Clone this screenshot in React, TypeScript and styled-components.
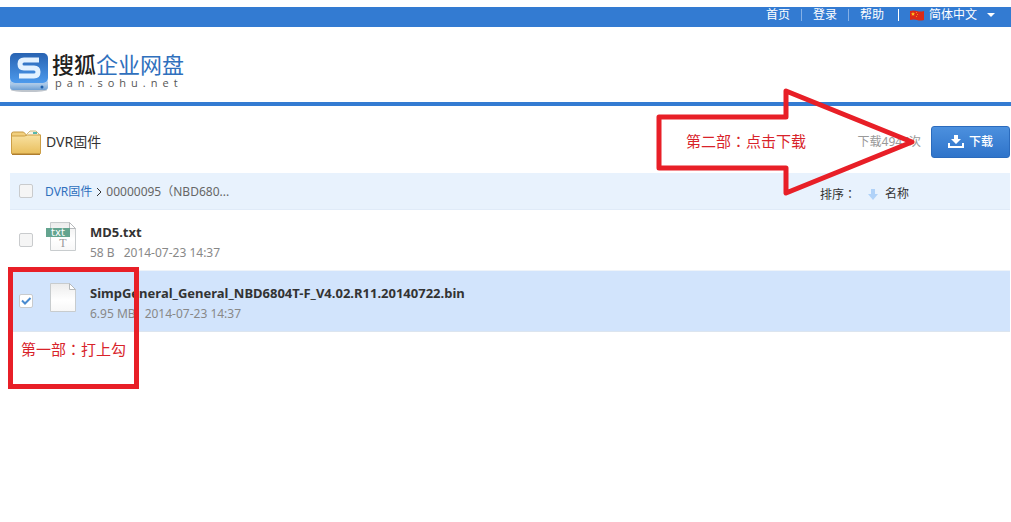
import React, { useState } from "react";
import styled, { createGlobalStyle } from "styled-components";

const GlobalStyle = createGlobalStyle`
  * { box-sizing: border-box; }
  body {
    margin: 0;
    background: #fff;
    color: #333;
    font-family: "Noto Sans", "Noto Sans CJK SC", sans-serif;
    font-size: 12px;
    line-height: 16px;
  }
`;

const Page = styled.div`
  position: relative;
  min-height: 100vh;
  padding-top: 7px;
`;

const TopBar = styled.nav`
  display: flex;
  justify-content: flex-end;
  align-items: flex-start;
  height: 20px;
  padding-right: 16px;
  background: #337bd2;
`;

const TopLink = styled.a`
  padding: 0 11px;
  border-right: 1px solid #84b0e6;
  color: #fff;
  line-height: 12px;
  margin-top: 2px;
  text-decoration: none;
  white-space: nowrap;
  &:last-of-type { padding-right: 14px; border-color: #fff; }
`;

const LanguageButton = styled.button`
  display: flex;
  align-items: center;
  gap: 5px;
  height: 16px;
  padding: 0 0 0 11px;
  border: 0;
  background: none;
  color: #fff;
  font: inherit;
`;

const Caret = styled.span`
  margin-left: 5px;
  border: 4px solid transparent;
  border-top-color: #fff;
  border-bottom: 0;
`;

const Header = styled.header`
  display: flex;
  align-items: flex-start;
  height: 79px;
  padding: 25px 9px 0;
  border-bottom: 4px solid #337bd2;
`;

const Brand = styled.a`
  display: flex;
  gap: 3px;
  color: #222;
  text-decoration: none;
`;

const BrandText = styled.span`
  display: flex;
  flex-direction: column;
`;

const BrandName = styled.span`
  display: flex;
  font-family: "Noto Sans CJK SC", sans-serif;
  font-size: 22px;
  font-weight: 500;
  line-height: 22px;
  white-space: nowrap;
`;

const BrandProduct = styled.span`
  color: #2f70bd;
  font-weight: 400;
`;

const BrandHost = styled.span`
  padding-left: 3px;
  color: #555;
  font-family: "Open Sans", sans-serif;
  font-size: 11px;
  line-height: 18px;
  letter-spacing: 5px;
`;

const Main = styled.main`
  margin: 0 1px 0 10px;
`;

const TitleRow = styled.div`
  display: flex;
  align-items: center;
  height: 67px;
  padding-top: 5px;
`;

const Title = styled.h1`
  flex: 1;
  margin: 0 0 0 4px;
  font-size: 14px;
  font-weight: 400;
  line-height: 20px;
`;

const DownloadCount = styled.span`
  margin-right: 10px;
  color: #999;
`;

const DownloadButton = styled.button`
  display: flex;
  align-items: center;
  justify-content: center;
  gap: 5px;
  width: 79px;
  height: 32px;
  padding: 0;
  border: 1px solid #2b6bbd;
  border-radius: 3px;
  background: linear-gradient(#4c90de, #2f74ca);
  color: #fff;
  font: inherit;
  font-weight: 500;
`;

const ListHead = styled.div`
  display: flex;
  align-items: center;
  height: 37px;
  padding: 0 101px 0 9px;
  border-bottom: 1px solid #e0ebf8;
  background: #e8f2fd;
`;

const Crumbs = styled.nav`
  display: flex;
  align-items: center;
  flex: 1;
  gap: 4px;
  margin-left: 12px;
  padding-top: 2px;
  color: #666;
`;

const CrumbLink = styled.a`
  color: #2f70bd;
  text-decoration: none;
`;

const Sort = styled.div`
  display: flex;
  align-items: center;
  padding-top: 6px;
`;

const SortButton = styled.button`
  display: flex;
  align-items: center;
  gap: 7px;
  margin-left: 12px;
  padding: 0;
  border: 0;
  background: none;
  color: #333;
  font: inherit;
`;

const Colon = styled.span`
  font-family: "Noto Sans CJK TC", sans-serif;
`;

const Checkbox = styled.input`
  appearance: none;
  flex: none;
  width: 14px;
  height: 14px;
  margin: 0;
  border: 1px solid #c9cbcd;
  border-radius: 2px;
  background: #f5f5f5;
  &:checked {
    background: #fff url("data:image/svg+xml,%3Csvg xmlns='http://www.w3.org/2000/svg' viewBox='0 0 12 12'%3E%3Cpath d='M2 5.5 5 8.5 10.5 3' fill='none' stroke='%23498bd0' stroke-width='2'/%3E%3C/svg%3E") center;
  }
`;

const FileList = styled.ul`
  margin: 0;
  padding: 0;
  list-style: none;
`;

const FileRow = styled.li<{ $selected: boolean }>`
  display: flex;
  align-items: center;
  height: 61px;
  padding-left: 9px;
  border-bottom: 1px solid ${(p) => (p.$selected ? "#dce5ef" : "#eef3f9")};
  background: ${(p) => (p.$selected ? "#d2e4fc" : "#fff")};
`;

const FileIcon = styled.span`
  display: flex;
  width: 32px;
  margin: 0 13px 7px 12px;
`;

const FileText = styled.label`
  display: flex;
  flex-direction: column;
  gap: 5px;
  padding-top: 4px;
  white-space: nowrap;
`;

const FileName = styled.strong`
  font-size: 13px;
  font-weight: 700;
`;

const FileMeta = styled.span`
  display: flex;
  gap: 9px;
  color: #888;
`;

const StepBox = styled.div`
  position: absolute;
  top: 267px;
  left: 8px;
  width: 131px;
  height: 122px;
  padding: 67px 0 0 8px;
  border: 5px solid #e81f27;
  color: #d8232a;
  font-size: 15px;
  line-height: 20px;
  white-space: nowrap;
  pointer-events: none;
`;

const StepArrow = styled.div`
  position: absolute;
  top: 86px;
  right: 93px;
  width: 264px;
  height: 112px;
  padding: 45px 0 0 32px;
  color: #d8232a;
  font-size: 15px;
  line-height: 20px;
  pointer-events: none;
  svg { position: absolute; inset: 0; }
`;

const Logo = () => (
  <svg width="40" height="41" viewBox="0 0 40 41" aria-hidden="true">
    <defs>
      <linearGradient id="tile" x2="0" y2="1">
        <stop stopColor="#2863b2" />
        <stop offset="1" stopColor="#4d9aec" />
      </linearGradient>
      <linearGradient id="drive" x2="0" y2="1">
        <stop stopColor="#d7e7f7" />
        <stop offset="1" stopColor="#6e9fd3" />
      </linearGradient>
    </defs>
    <ellipse cx="20" cy="38" rx="18" ry="2" fill="#bfc5cc" />
    <path d="M1 28h38v7q0 3-3 3H4q-3 0-3-3z" fill="url(#drive)" />
    <path d="M1 30 5 32h30l4-2" fill="none" stroke="#a8c5e4" />
    <rect x="1" y="1" width="38" height="30" rx="5" fill="url(#tile)" />
    <path d="M30 8H15q-4 0-4 4t4 4h10q4 0 4 4t-4 4H10" fill="none" stroke="#e4f2ff" strokeWidth="5" />
    <circle cx="33" cy="35" r="1.5" fill="#1c5fad" />
  </svg>
);

const Flag = () => (
  <svg width="14" height="11" viewBox="0 0 14 11" aria-hidden="true">
    <path d="M0 1q4-1 7 0t7 0v9q-4 1-7 0t-7 0z" fill="#dc2a17" />
    <path d="m3 2 .6 1.3L5 3.4 4 4.3l.3 1.4L3 5l-1.3.7L2 4.3 1 3.4l1.4-.1z" fill="#ffc31f" />
    <path d="M6 2h1v1H6zm1 2h1v1H7zM6 6h1v1H6z" fill="#f2941f" />
  </svg>
);

const Folder = () => (
  <svg width="32" height="27" viewBox="0 0 32 27" aria-hidden="true">
    <defs>
      <linearGradient id="folder" x2="0" y2="1">
        <stop stopColor="#f8e1a0" />
        <stop offset="1" stopColor="#e9bf5e" />
      </linearGradient>
    </defs>
    <path d="M1.500 24V5q0-2 2-2h10l3 3h14v18z" fill="#f1cf7d" stroke="#c69a43" />
    <path d="m16 6 4-4h6l3 3v4H16z" fill="#f8f5e9" stroke="#d2bd80" />
    <path d="M23 3h4v2h-4z" fill="#55b8ae" />
    <path d="M1.500 7h13l3-1h13v18.500h-29z" fill="url(#folder)" stroke="#cc9f47" />
    <path d="M2 25.500h28" stroke="#af7d2e" />
  </svg>
);

const FileDrawing = ({ text }: { text: boolean }) => (
  <svg width="32" height="30" viewBox="0 0 32 30" aria-hidden="true">
    <defs>
      <linearGradient id="paper" x2="0" y2="1">
        <stop stopColor="#ececec" />
        <stop offset=".6" stopColor="#fff" />
        <stop offset="1" stopColor="#f7f7f7" />
      </linearGradient>
    </defs>
    <path d="M5.500 .5h19l6 6v22h-25z" fill="url(#paper)" stroke="#c8ccce" />
    <path d="M24.500 .5v6h6z" fill="#fff" stroke="#b7babc" />
    {text && (
      <>
        <path d="M1 6h24v9H1z" fill="#64a48f" />
        <text x="13" y="14" textAnchor="middle" fill="#fff" fontSize="10" fontFamily="DejaVu Sans">txt</text>
        <text x="18" y="25" textAnchor="middle" fill="#999" fontSize="12" fontFamily="Liberation Serif">T</text>
      </>
    )}
  </svg>
);

const files = [
  { id: "md5", name: "MD5.txt", size: "58 B", date: "2014-07-23 14:37", text: true },
  { id: "firmware", name: "SimpGeneral_General_NBD6804T-F_V4.02.R11.20140722.bin", size: "6.95 MB", date: "2014-07-23 14:37", text: false },
];

export default function App() {
  const [selected, setSelected] = useState<string[]>(["firmware"]);
  const toggle = (id: string) =>
    setSelected((now) => (now.includes(id) ? now.filter((x) => x !== id) : [...now, id]));

  return (
    <Page>
      <GlobalStyle />
      <TopBar>
        <TopLink href="#home">首页</TopLink>
        <TopLink href="#login">登录</TopLink>
        <TopLink href="#help">帮助</TopLink>
        <LanguageButton type="button"><Flag />简体中文<Caret /></LanguageButton>
      </TopBar>
      <Header>
        <Brand href="#home">
          <Logo />
          <BrandText>
            <BrandName>搜狐<BrandProduct>企业网盘</BrandProduct></BrandName>
            <BrandHost>pan.sohu.net</BrandHost>
          </BrandText>
        </Brand>
      </Header>
      <Main>
        <TitleRow>
          <Folder />
          <Title>DVR固件</Title>
          <DownloadCount>下载4947次</DownloadCount>
          <DownloadButton type="button">
            <svg width="16" height="14" viewBox="0 0 16 14" aria-hidden="true">
              <path d="M6 0h4v4h3L8 9 3 4h3zM0 8h2v3h12V8h2v5H0z" fill="#fff" />
            </svg>
            下载
          </DownloadButton>
        </TitleRow>
        <ListHead>
          <Checkbox type="checkbox" aria-label="全选" />
          <Crumbs>
            <CrumbLink href="#dvr">DVR固件</CrumbLink>
            <svg width="6" height="10" viewBox="0 0 6 10" aria-hidden="true">
              <path d="m1 1 4 4-4 4" fill="none" stroke="#333" />
            </svg>
            <span>00000095（NBD680...</span>
          </Crumbs>
          <Sort>
            <span>排序<Colon>：</Colon></span>
            <SortButton type="button">
              <svg width="10" height="11" viewBox="0 0 10 11" aria-hidden="true">
                <path d="M3 0h4v5h3l-5 6-5-6h3z" fill="#b0d2f8" />
              </svg>
              名称
            </SortButton>
          </Sort>
        </ListHead>
        <FileList>
          {files.map((f) => (
            <FileRow key={f.id} $selected={selected.includes(f.id)}>
              <Checkbox id={f.id} type="checkbox" checked={selected.includes(f.id)} onChange={() => toggle(f.id)} />
              <FileIcon><FileDrawing text={f.text} /></FileIcon>
              <FileText htmlFor={f.id}>
                <FileName>{f.name}</FileName>
                <FileMeta><span>{f.size}</span><span>{f.date}</span></FileMeta>
              </FileText>
            </FileRow>
          ))}
        </FileList>
      </Main>
      <StepBox>第一部<Colon>：</Colon>打上勾</StepBox>
      <StepArrow>
        <svg width="264" height="112" viewBox="0 0 264 112" aria-hidden="true">
          <path d="M5 31H132V5L258 56 132 107V82H5z" fill="none" stroke="#e81f27" strokeWidth="5" strokeLinejoin="round" />
        </svg>
        第二部<Colon>：</Colon>点击下载
      </StepArrow>
    </Page>
  );
}
